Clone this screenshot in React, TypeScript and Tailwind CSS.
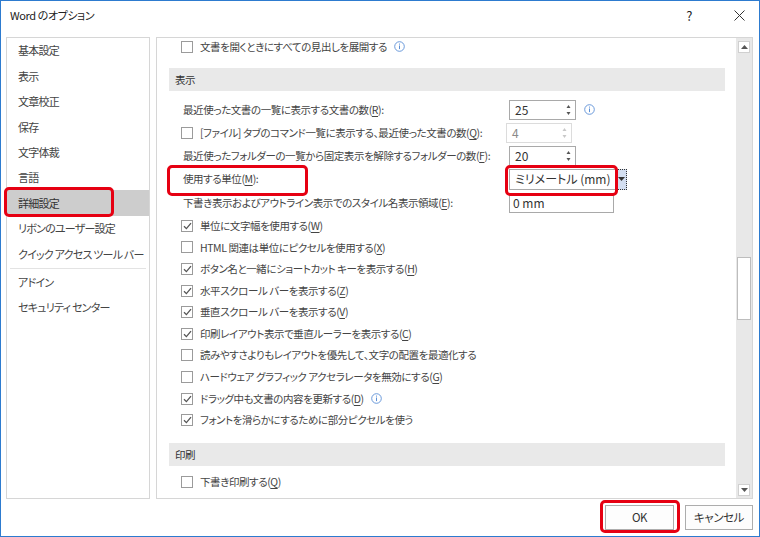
import type { ReactNode } from "react";

const ui = "font-['Noto_Sans_CJK_JP','Noto_Sans',sans-serif] [font-feature-settings:'palt']";

const navTop = ["基本設定", "表示", "文章校正", "保存", "文字体裁", "言語", "詳細設定", "リボンのユーザー設定", "クイック アクセス ツール バー"];
const navBottom = ["アドイン", "セキュリティ センター"];

type CheckRow = { checked: boolean; text: string; key?: string; info?: boolean };

const checks: CheckRow[] = [
  { checked: true, text: "単位に文字幅を使用する", key: "W" },
  { checked: false, text: "HTML 関連は単位にピクセルを使用する", key: "X" },
  { checked: true, text: "ボタン名と一緒にショートカット キーを表示する", key: "H" },
  { checked: true, text: "水平スクロール バーを表示する", key: "Z" },
  { checked: true, text: "垂直スクロール バーを表示する", key: "V" },
  { checked: true, text: "印刷レイアウト表示で垂直ルーラーを表示する", key: "C" },
  { checked: false, text: "読みやすさよりもレイアウトを優先して、文字の配置を最適化する" },
  { checked: false, text: "ハードウェア グラフィック アクセラレータを無効にする", key: "G" },
  { checked: true, text: "ドラッグ中も文書の内容を更新する", key: "D", info: true },
  { checked: true, text: "フォントを滑らかにするために部分ピクセルを使う" },
];

function Label({ text, k, colon }: { text: string; k?: string; colon?: boolean }) {
  return (
    <span className="whitespace-nowrap">
      {text}
      {k ? (
        <>
          (<span className="underline underline-offset-2">{k}</span>)
        </>
      ) : null}
      {colon ? ":" : null}
    </span>
  );
}

function Checkbox({ checked }: { checked: boolean }) {
  return (
    <span className="flex h-[12px] w-[12px] shrink-0 items-center justify-center border border-[#9b9b9b] bg-white">
      {checked ? (
        <svg width="9" height="8" viewBox="0 0 9 8">
          <path d="M1 4.2 L3.4 6.6 L8 1.2" fill="none" stroke="#555" strokeWidth="1.3" />
        </svg>
      ) : null}
    </span>
  );
}

function Info() {
  return (
    <svg width="11" height="11" viewBox="0 0 11 11" className="shrink-0">
      <circle cx="5.5" cy="5.5" r="4.8" fill="none" stroke="#5b8fd6" strokeWidth="0.9" />
      <rect x="5" y="4.5" width="1" height="3.6" fill="#5b8fd6" />
      <rect x="5" y="2.6" width="1" height="1" fill="#5b8fd6" />
    </svg>
  );
}

function Spin({ value, disabled, className }: { value: string; disabled?: boolean; className?: string }) {
  const c = disabled ? "#c8c8c8" : "#555";
  return (
    <div
      className={`flex h-[20px] items-center justify-between border bg-white pl-[5px] pr-[3px] tracking-normal ${
        disabled ? "border-[#dcdcdc] text-[#8a8a8a]" : "border-[#a9a9a9] text-[#333]"
      } ${className ?? ""}`}
    >
      <span className="text-[12px]">{value}</span>
      <svg width="7" height="14" viewBox="0 0 7 14">
        <path d="M1.5 5 L3.5 2 L5.5 5 Z" fill={c} />
        <path d="M1.5 9 L3.5 12 L5.5 9 Z" fill={c} />
      </svg>
    </div>
  );
}

function Header({ children }: { children: ReactNode }) {
  return <div className="ml-[12px] mr-[11px] flex h-[23px] items-center bg-[#e9e9e9] pl-[6px] text-[#333]">{children}</div>;
}

function FormRow({ children, control }: { children: ReactNode; control: ReactNode }) {
  return (
    <div className="flex h-full items-center">
      <div className="w-[352px] shrink-0 pl-[26px]">{children}</div>
      {control}
    </div>
  );
}

export default function App() {
  return (
    <div
      className={`relative flex h-[537px] w-[760px] flex-col overflow-hidden border border-[#2d7bcf] bg-white text-[10.5px] tracking-[-0.04em] text-[#444] ${ui}`}
    >
      {/* title bar */}
      <div className="flex h-[29px] shrink-0 items-center justify-between pl-[9px] pr-[14px] text-[11px] text-[#222]">
        <span>Word のオプション</span>
        <div className="flex items-center gap-[42px]">
          <span className="text-[13px]">?</span>
          <svg width="11" height="11" viewBox="0 0 11 11">
            <path d="M0.5 0.5 L10.5 10.5 M10.5 0.5 L0.5 10.5" stroke="#333" strokeWidth="1" />
          </svg>
        </div>
      </div>

      <div className="flex gap-[6px] px-[5px] pt-[7px]">
        {/* left nav */}
        <div className="h-[462px] w-[144px] shrink-0 border border-[#d6d6d6] text-[11px] tracking-[-0.07em]">
          {navTop.map((n) => (
            <div
              key={n}
              className={`flex h-[25.4px] items-center whitespace-nowrap pl-[11px] ${n === "詳細設定" ? "bg-[#cdcdcd] text-[#333]" : ""}`}
            >
              {n}
            </div>
          ))}
          <div className="mx-[3px] my-[1px] h-px bg-[#e3e3e3]" />
          {navBottom.map((n) => (
            <div key={n} className="flex h-[25.4px] items-center whitespace-nowrap pl-[11px]">
              {n}
            </div>
          ))}
        </div>

        {/* main panel */}
        <div className="flex h-[462px] w-[597px] shrink-0 border border-[#d6d6d6]">
          <div className="flex min-w-0 flex-1 flex-col overflow-hidden">
            <div className="flex h-[17px] items-center gap-[7px] pl-[24px]">
              <Checkbox checked={false} />
              <span>文書を開くときにすべての見出しを展開する</span>
              <Info />
            </div>
            <div className="mt-[13px]">
              <Header>表示</Header>
            </div>
            <div className="mt-[7px] h-[23px]">
              <FormRow
                control={
                  <>
                    <Spin value="25" className="w-[67px]" />
                    <span className="ml-[8px]">
                      <Info />
                    </span>
                  </>
                }
              >
                <Label text="最近使った文書の一覧に表示する文書の数" k="R" colon />
              </FormRow>
            </div>
            <div className="h-[23px]">
              <div className="flex h-full items-center">
                <div className="flex w-[349px] shrink-0 items-center gap-[7px] pl-[24px]">
                  <Checkbox checked={false} />
                  <Label text="[ファイル] タブのコマンド一覧に表示する、最近使った文書の数" k="Q" colon />
                </div>
                <Spin value="4" disabled className="w-[66px]" />
              </div>
            </div>
            <div className="h-[23px]">
              <FormRow control={<Spin value="20" className="w-[67px]" />}>
                <Label text="最近使ったフォルダーの一覧から固定表示を解除するフォルダーの数" k="F" colon />
              </FormRow>
            </div>
            <div className="h-[24px]">
              <FormRow
                control={
                  <div className="flex h-[21px] items-stretch">
                    <div className="flex w-[107px] items-center border border-[#a9a9a9] bg-white pl-[5px] text-[12px] tracking-normal text-[#333]">
                      ミリメートル (mm)
                    </div>
                    <div className="flex w-[11px] items-center justify-center border border-dotted border-[#333] bg-[#d3def1]">
                      <svg width="7" height="4" viewBox="0 0 7 4">
                        <path d="M0 0 L7 0 L3.5 4 Z" fill="#333" />
                      </svg>
                    </div>
                  </div>
                }
              >
                <Label text="使用する単位" k="M" colon />
              </FormRow>
            </div>
            <div className="h-[24px]">
              <FormRow
                control={
                  <div className="flex h-[20px] w-[105px] items-center border border-[#a9a9a9] bg-white pl-[3px] text-[12px] tracking-normal text-[#333]">
                    0 mm
                  </div>
                }
              >
                <Label text="下書き表示およびアウトライン表示でのスタイル名表示領域" k="E" colon />
              </FormRow>
            </div>
            {checks.map((c) => (
              <div key={c.text} className="flex h-[21.6px] items-center gap-[7px] pl-[24px]">
                <Checkbox checked={c.checked} />
                <Label text={c.text} k={c.key} />
                {c.info ? <Info /> : null}
              </div>
            ))}
            <div className="mt-[12px]">
              <Header>印刷</Header>
            </div>
            <div className="mt-[5px] flex h-[22px] items-center gap-[7px] pl-[24px]">
              <Checkbox checked={false} />
              <Label text="下書き印刷する" k="Q" />
            </div>
          </div>

          {/* scrollbar */}
          <div className="flex w-[16px] shrink-0 flex-col bg-[#e8e8e8]">
            <div className="flex h-[17px] items-center justify-center">
              <div className="flex h-[12px] w-[12px] items-center justify-center border border-[#d0d0d0] bg-white">
                <svg width="7" height="4" viewBox="0 0 7 4">
                  <path d="M0 4 L7 4 L3.5 0 Z" fill="#555" />
                </svg>
              </div>
            </div>
            <div className="mx-[1px] mt-[202px] h-[63px] border border-[#bdbdbd] bg-white" />
            <div className="flex-1" />
            <div className="flex h-[17px] items-center justify-center">
              <div className="flex h-[12px] w-[12px] items-center justify-center border border-[#d0d0d0] bg-white">
                <svg width="7" height="4" viewBox="0 0 7 4">
                  <path d="M0 0 L7 0 L3.5 4 Z" fill="#555" />
                </svg>
              </div>
            </div>
          </div>
        </div>
      </div>

      {/* buttons */}
      <div className="flex flex-1 items-center justify-end gap-[11px] pr-[6px]">
        <button className="flex h-[25px] w-[69px] items-center justify-center border border-[#adadad] bg-[#fdfdfd] text-[11.5px] text-[#333]">
          OK
        </button>
        <button className="flex h-[25px] w-[68px] items-center justify-center border border-[#adadad] bg-[#fdfdfd] text-[11.5px] text-[#333]">
          キャンセル
        </button>
      </div>

      {/* red annotation boxes */}
      <div className="pointer-events-none absolute left-[3px] top-[186px] h-[30px] w-[110px] rounded-[5px] border-[3px] border-[#e60012]" />
      <div className="pointer-events-none absolute left-[166px] top-[164px] h-[31px] w-[141px] rounded-[5px] border-[3px] border-[#e60012]" />
      <div className="pointer-events-none absolute left-[504px] top-[164px] h-[31px] w-[113px] rounded-[5px] border-[3px] border-[#e60012]" />
      <div className="pointer-events-none absolute left-[599px] top-[499px] h-[33px] w-[80px] rounded-[5px] border-[3px] border-[#e60012]" />
    </div>
  );
}
